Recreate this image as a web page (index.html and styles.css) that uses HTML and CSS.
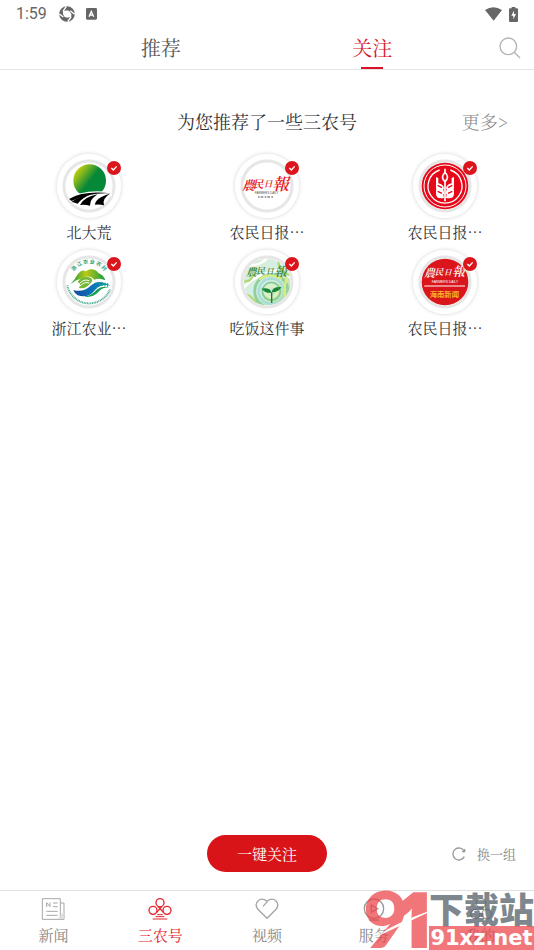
FILE: index.html
```html
<!DOCTYPE html>
<html lang="zh-CN">
<head>
<meta charset="utf-8">
<meta name="viewport" content="width=device-width, initial-scale=1">
<title>三农号</title>
<link rel="stylesheet" href="styles.css">
</head>
<body>
<div class="app">
  <div class="status">
    <span class="time">1:59</span>
    <svg class="status-swirl" width="16" height="16" viewBox="0 0 48 48"><circle cx="24" cy="24" r="17" fill="none" stroke="#666" stroke-width="13"/><path d="M12 14H28L37 23V34H22L12 25Z" fill="#fff"/><path d="M12 16L22 1M34 14L47 25M36 33L26 47M13 33L1 24" stroke="#fff" stroke-width="4"/></svg>
    <svg class="status-app" width="11" height="12" viewBox="0 0 33 36"><rect width="33" height="35" rx="4" fill="#666"/><path d="M9 26L16 10L23 26M12 21H20" fill="none" stroke="#fff" stroke-width="4"/></svg>
    <svg class="status-wifi" width="17" height="14" viewBox="0 0 51 42"><path d="M0 9Q25-8 51 9L26 41Z" fill="#666"/></svg>
    <svg width="9" height="15" viewBox="0 0 27 45"><path d="M8 0H19V4H24Q27 4 27 7V42Q27 45 24 45H3Q0 45 0 42V7Q0 4 3 4H8Z" fill="#666"/><path d="M15 11L7 26H13V37L21 21H15Z" fill="#fff"/></svg>
  </div>

  <header class="top">
    <nav class="tabs">
      <a class="tab" href="#recommend">推荐</a>
      <a class="tab tab-active" href="#follow">关注</a>
    </nav>
    <button class="search" type="button" aria-label="搜索"><svg width="22" height="22" viewBox="0 0 66 66" fill="none" stroke="#b4b4b4" stroke-width="4"><circle cx="28" cy="28" r="25"/><path d="M46 46L63 63"/></svg></button>
  </header>

  <main class="content">
    <div class="heading">
      <h1 class="title">为您推荐了一些三农号</h1>
      <a class="more" href="#more">更多&gt;</a>
    </div>

    <ul class="accounts">
      <li class="account">
        <div class="avatar">
          <svg class="logo" viewBox="50 28 192 192">
            <defs><linearGradient id="sun" x1="0" y1="0.1" x2="0.65" y2="0.6"><stop offset="0" stop-color="#e5df09"/><stop offset=".4" stop-color="#7fb51e"/><stop offset=".8" stop-color="#068839"/></linearGradient></defs>
            <circle cx="148" cy="108" r="49" fill="url(#sun)"/>
            <path d="M82 164Q128 131 214 143L214 156Q160 146 100 171Z" fill="#fff"/>
            <path d="M86 163Q130 137 212 146Q150 142 94 169Z"/>
            <path d="M94 171Q120 152 150 150Q128 157 112 177Z"/>
            <path d="M119 181Q130 157 172 149Q148 164 149 183Q134 179 119 181Z"/>
            <path d="M164 180Q165 159 209 147Q184 162 191 182Q178 178 164 180Z"/>
          </svg>
          <svg class="badge" viewBox="0 0 42 42"><circle cx="21" cy="21" r="21" fill="#dc151c"/><path d="M13 21L19 27L29 16" fill="none" stroke="#fff" stroke-width="4"/></svg>
        </div>
        <span class="name">北大荒</span>
      </li>
      <li class="account">
        <div class="avatar">
          <svg class="logo" viewBox="50 28 192 192">
            <g class="script" fill="#e60f19"><text x="71" y="135" font-size="38">農</text><text x="103" y="129" font-size="32">民</text><text x="136" y="126" font-size="26">日</text><text x="162" y="135" font-size="50">報</text></g>
            <text class="latin" x="145" y="148" font-size="9" fill="#555">FARMERS DAILY</text>
            <path d="M119 157H166" stroke="#888" stroke-width="5" stroke-dasharray="5 3 8 4"/>
          </svg>
          <svg class="badge" viewBox="0 0 42 42"><circle cx="21" cy="21" r="21" fill="#dc151c"/><path d="M13 21L19 27L29 16" fill="none" stroke="#fff" stroke-width="4"/></svg>
        </div>
        <span class="name">农民日报⋯</span>
      </li>
      <li class="account">
        <div class="avatar">
          <svg class="logo" viewBox="50 28 192 192">
            <circle cx="146" cy="124" r="70" fill="#e60719"/>
            <g fill="none" stroke="#fff" stroke-width="3"><circle cx="146" cy="124" r="63"/><path d="M130 76A51 51 0 1 0 162 76" stroke-width="4"/></g>
            <path d="M146 72V86M146 110V170" stroke="#fff" stroke-width="5"/>
            <path d="M146 84Q161 96 146 111Q131 96 146 84Z" fill="none" stroke="#fff" stroke-width="5"/>
            <g fill="#fff"><path d="M119 97L126 100V116Q143 119 143 133Q119 132 119 115ZM119 118Q142 122 143 143V149Q119 147 119 130ZM119 136Q142 140 143 160Q119 164 119 148Z"/><path d="M173 97L166 100V116Q149 119 149 133Q173 132 173 115ZM173 118Q150 122 149 143V149Q173 147 173 130ZM173 136Q150 140 149 160Q173 164 173 148Z"/></g>
            <path d="M124 122L137 129M124 140L137 146M168 122L155 129M168 140L155 146" stroke="#e60719" stroke-width="4"/>
          </svg>
          <svg class="badge" viewBox="0 0 42 42"><circle cx="21" cy="21" r="21" fill="#dc151c"/><path d="M13 21L19 27L29 16" fill="none" stroke="#fff" stroke-width="4"/></svg>
        </div>
        <span class="name">农民日报⋯</span>
      </li>
      <li class="account">
        <div class="avatar">
          <svg class="logo" viewBox="50 22 192 192">
            <defs><linearGradient id="hill"><stop offset="0" stop-color="#159c42"/><stop offset=".45" stop-color="#bcc914"/><stop offset="1" stop-color="#169b45"/></linearGradient><linearGradient id="river"><stop offset="0" stop-color="#18479e"/><stop offset=".55" stop-color="#0878b8"/><stop offset="1" stop-color="#11a39d"/></linearGradient>
            <path id="seal-top" d="M90 118A56 56 0 0 1 202 118"/></defs>
            <text class="seal" font-size="15" fill="#199b70"><textPath href="#seal-top" startOffset="50%" text-anchor="middle">浙 江 农 业 农 村</textPath></text>
            <path d="M81 128A67 67 0 0 0 209 140" fill="none" stroke="#47ac93" stroke-width="6" stroke-dasharray="3 2"/>
            <path d="M90 124Q104 111 110 98Q124 77 136 86L148 80Q165 78 174 91Q190 97 195 113Q178 104 162 111Q147 94 126 107Q108 110 90 124Z" fill="url(#hill)"/>
            <path d="M112 119Q120 101 143 103Q164 108 151 122Q133 142 116 135Q124 125 112 119Z" fill="#74b83a"/>
            <path d="M117 123Q130 108 147 114M119 130Q132 116 147 121" fill="none" stroke="#fff" stroke-width="3"/>
            <path d="M99 142Q129 151 153 128Q174 107 211 129Q183 122 165 141Q143 169 112 158Q103 153 99 142Z" fill="url(#river)"/>
            <path d="M132 162Q156 158 168 142Q185 127 207 135Q187 133 174 148Q157 166 132 162Z" fill="#16a057"/>
            <path d="M178 118V128M186 119V130M194 120V131M202 121V133" stroke="#23988b" stroke-width="3"/>
          </svg>
          <svg class="badge" viewBox="0 0 42 42"><circle cx="21" cy="21" r="21" fill="#dc151c"/><path d="M13 21L19 27L29 16" fill="none" stroke="#fff" stroke-width="4"/></svg>
        </div>
        <span class="name">浙江农业⋯</span>
      </li>
      <li class="account">
        <div class="avatar">
          <svg class="logo" viewBox="50 22 192 192">
            <defs><clipPath id="disc"><circle cx="146" cy="118" r="70"/></clipPath><linearGradient id="field" x2="1" y2="1"><stop offset="0" stop-color="#d6ecc3"/><stop offset=".5" stop-color="#d5efec"/><stop offset="1" stop-color="#b8dd82"/></linearGradient></defs>
            <g clip-path="url(#disc)">
              <rect x="76" y="48" width="140" height="140" fill="url(#field)"/>
              <g fill="none"><path d="M76 135Q114 88 205 80M76 68Q123 72 145 48M175 48Q190 90 220 108" stroke="#fff" stroke-width="8"/><path d="M77 155Q99 153 116 188M78 115Q98 120 105 94M180 55Q180 88 216 98" stroke="#b4d978" stroke-width="7"/><circle cx="159" cy="146" r="50" stroke="#91cf9b" stroke-width="9"/><circle cx="159" cy="146" r="38" stroke="#a8ded7" stroke-width="8"/><circle cx="159" cy="146" r="27" stroke="#83c98b" stroke-width="5"/><circle cx="159" cy="146" r="17" stroke="#e0f3c1" stroke-width="6"/><path d="M206 103Q190 147 208 186M123 111Q151 86 190 110" stroke="#d9eb81" stroke-width="7"/></g>
            </g>
            <g class="script" fill="#397f2a"><text x="83" y="100" font-size="32">農</text><text x="114" y="95" font-size="26">民</text><text x="143" y="94" font-size="23">日</text><text x="168" y="99" font-size="38">報</text></g>
            <path d="M160 181V149" stroke="#267437" stroke-width="4"/><path d="M160 150Q143 153 129 138Q155 133 160 150ZM160 149Q162 131 190 133Q179 150 160 149Z" fill="#188737"/>
          </svg>
          <svg class="badge" viewBox="0 0 42 42"><circle cx="21" cy="21" r="21" fill="#dc151c"/><path d="M13 21L19 27L29 16" fill="none" stroke="#fff" stroke-width="4"/></svg>
        </div>
        <span class="name">吃饭这件事</span>
      </li>
      <li class="account">
        <div class="avatar">
          <svg class="logo" viewBox="50 22 192 192">
            <circle cx="146" cy="118" r="70" fill="#da151b"/>
            <g class="script" fill="#fff"><text x="83" y="102" font-size="33">農</text><text x="115" y="97" font-size="26">民</text><text x="143" y="96" font-size="23">日</text><text x="168" y="101" font-size="38">報</text></g>
            <text class="latin" x="146" y="121" font-size="10" fill="#fff">FARMERS DAILY</text>
            <path d="M84 130H206" stroke="#fff" stroke-width="3"/>
            <text class="caption" x="144" y="162" font-size="22" fill="#f5b52a">海南新闻</text>
          </svg>
          <svg class="badge" viewBox="0 0 42 42"><circle cx="21" cy="21" r="21" fill="#dc151c"/><path d="M13 21L19 27L29 16" fill="none" stroke="#fff" stroke-width="4"/></svg>
        </div>
        <span class="name">农民日报⋯</span>
      </li>
    </ul>
  </main>

  <div class="actions">
    <button class="follow-all" type="button">一键关注</button>
    <button class="refresh" type="button">
      <svg width="14" height="14" viewBox="0 0 42 42" fill="none" stroke="#999" stroke-width="4"><path d="M37 13A18 18 0 1 0 37 29"/><path d="M38 6V14H30"/></svg>
      换一组
    </button>
  </div>

  <nav class="bottom">
    <a class="item" href="#news"><svg width="24" height="24" viewBox="0 0 72 72" fill="none" stroke="#a8a8a8" stroke-width="3"><path d="M58 66V5H4V67H69V18H59"/><path d="M17 30V17L27 29V16M36 18H50M36 29H50M16 43H50M16 55H50"/><path d="M50 66L68 44V66Z" fill="#ddd" stroke="none"/></svg>新闻</a>
    <a class="item item-active" href="#accounts"><svg width="24" height="24" viewBox="0 0 72 72" fill="none" stroke="#e3262d" stroke-width="4"><circle cx="36" cy="17" r="12"/><circle cx="15" cy="40" r="12"/><circle cx="57" cy="40" r="12"/><path d="M30 28L46 46M42 28L26 46"/><path d="M28 53H44M23 59H49M14 66H58" stroke-width="3"/></svg>三农号</a>
    <a class="item" href="#video"><svg width="24" height="24" viewBox="0 0 72 72" fill="none" stroke="#a5a5a5" stroke-width="4"><path d="M36 64L8 36C-5 17 16-4 36 13C56-4 77 17 64 36Z"/><path d="M24 28L37 14"/></svg>视频</a>
    <a class="item" href="#service"><svg width="24" height="24" viewBox="0 0 72 72" fill="none" stroke="#999" stroke-width="4"><circle cx="36" cy="35" r="29"/><path d="M28 24V46L47 35ZM22 69H50"/></svg>服务</a>
    <a class="item" href="#mine"><svg width="24" height="24" viewBox="0 0 72 72" fill="none" stroke="#999" stroke-width="4"><circle cx="36" cy="19" r="14"/><circle cx="19" cy="51" r="14"/><circle cx="53" cy="51" r="14"/></svg>我的</a>
  </nav>

  <div class="stamp">
    <svg class="stamp-mark" width="66" height="60" viewBox="0 0 66 60"><text class="nine" x="0" y="58">9</text><text class="one" x="28" y="58">1</text><path d="M14 46Q36 32 65 22Q40 34 14 46Z" fill="#fff" stroke="#fff" stroke-width="1"/></svg>
    <div class="stamp-text"><span class="stamp-name">下载站</span><span class="stamp-site">91xz.net</span></div>
  </div>
</div>
</body>
</html>
```
FILE: styles.css
```css
* { box-sizing: border-box; }

body {
  margin: 0;
  background: #fff;
  color: #333;
  font-family: "Noto Serif CJK SC", "Noto Sans CJK SC", serif;
  font-size: 15px;
  font-weight: 400;
}

a { color: inherit; text-decoration: none; }
button { border: 0; padding: 0; background: none; font: inherit; color: inherit; }
svg { display: block; }

.app { position: relative; display: flex; flex-direction: column; min-height: 100vh; }

.status { display: flex; align-items: center; height: 28px; padding: 0 16px; }
.time { color: #666; font: 400 16px/28px Roboto, sans-serif; }
.status-swirl { margin-left: 12px; }
.status-app { margin-left: 11px; }
.status-wifi { margin-left: auto; margin-right: 7px; }

.top { display: grid; grid-template-columns: 55px 1fr 56px; height: 42px; border-bottom: 1px solid #e4e4e4; }
.tabs { grid-column: 2; display: grid; grid-template-columns: 1fr 1fr; }
.tab { display: flex; flex-direction: column; align-items: center; font-size: 20px; line-height: 39px; color: #555; }
.tab-active { color: #d9122a; }
.tab-active::after { content: ""; width: 22px; height: 2px; background: #d9122a; }
.search { display: flex; align-items: center; justify-content: flex-end; padding-right: 13px; padding-bottom: 2px; }

.content { flex: 1; }
.heading { display: grid; grid-template-columns: 1fr auto 1fr; margin-top: 36px; padding: 0 26px; line-height: 30px; }
.title { grid-column: 2; margin: 0; font-size: 18px; font-weight: 400; }
.more { justify-self: end; font-size: 18px; font-weight: 300; color: #888; }

.accounts { display: grid; grid-template-columns: repeat(3, 1fr); gap: 8px 0; margin: 18px 0 0; padding: 0; list-style: none; }
.account { display: flex; flex-direction: column; align-items: center; gap: 4px; }
.avatar { position: relative; width: 64px; height: 64px; border-radius: 50%; background: radial-gradient(circle, #fff 23px, #e6e6e6 24px, #e6e6e6 26px, #fff 27px); box-shadow: 0 0 4px rgba(0, 0, 0, 0.18); }
.logo { width: 100%; height: 100%; }
.badge { position: absolute; top: 7px; right: 0; width: 14px; height: 14px; }
.name { line-height: 20px; }

.script { font-family: "Noto Serif CJK SC", "Noto Sans CJK SC", serif; font-weight: 600; font-style: italic; }
.latin { font-family: "Liberation Sans", sans-serif; font-weight: 400; text-anchor: middle; }
.seal { font-family: "Noto Sans CJK SC", sans-serif; font-weight: 700; }
.caption { font-family: "Noto Sans CJK SC", sans-serif; font-weight: 700; text-anchor: middle; }

.actions { display: grid; grid-template-columns: 1fr auto 1fr; align-items: center; padding: 0 18px 18px; }
.follow-all { grid-column: 2; padding: 0 30px; border-radius: 19px; background: #d91419; color: #fff; line-height: 37px; }
.refresh { justify-self: end; display: flex; align-items: center; gap: 11px; font-size: 13px; line-height: 20px; color: #888; }

.bottom { display: grid; grid-template-columns: repeat(5, 1fr); height: 60px; border-top: 1px solid #e0e0e0; }
.item { display: flex; flex-direction: column; align-items: center; gap: 4px; padding-top: 6px; line-height: 20px; color: #888; }
.item-active { color: #e3262d; }

.stamp { position: absolute; right: 0; bottom: 0; display: flex; pointer-events: none; }
.stamp-mark { opacity: 0.72; fill: #ec4248; overflow: visible; }
.nine { font: 900 78px Lato, sans-serif; }
.one { font: 800 78px "Open Sans", sans-serif; }
.stamp-text { display: flex; flex-direction: column; width: 105px; }
.stamp-name { color: rgba(90, 102, 111, 0.8); font: 900 35px/36px "Noto Sans CJK SC", sans-serif; }
.stamp-site { background: rgba(236, 66, 72, 0.72); color: #fff; text-align: center; font: 700 21px/24px "DejaVu Sans", sans-serif; }
```
